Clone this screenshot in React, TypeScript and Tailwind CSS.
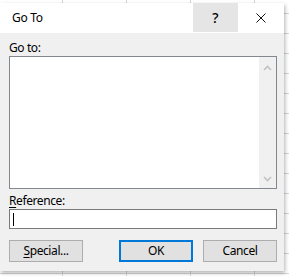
import * as React from "react"

const font = { fontFamily: '"Noto Sans", "Open Sans", sans-serif' }

function Chevron({ up }: { up?: boolean }) {
    return (
        <svg width="9" height="6" viewBox="0 0 9 6" className="block">
            <path
                d={up ? "M1 5 L4.5 1.5 L8 5" : "M1 1 L4.5 4.5 L8 1"}
                fill="none"
                stroke="#c2c2c2"
                strokeWidth="1.6"
            />
        </svg>
    )
}

function DialogButton({ children, isDefault }: { children: React.ReactNode; isDefault?: boolean }) {
    return (
        <button
            className={
                isDefault
                    ? "h-[22px] w-[74px] bg-[#e1e1e1] border-2 border-[#0078d7] text-[12px] tracking-[-0.4px] text-black leading-none"
                    : "h-[22px] w-[74px] bg-[#e1e1e1] border border-[#adadad] text-[12px] tracking-[-0.4px] text-black leading-none"
            }
        >
            {children}
        </button>
    )
}

export default function App() {
    return (
        <div
            className="relative w-[289px] h-[276px] overflow-hidden bg-white bg-[linear-gradient(to_right,#d4d4d4_1px,transparent_1px),linear-gradient(to_bottom,#d4d4d4_1px,transparent_1px)] [background-size:64px_20px] [background-position:62px_13px]"
            style={font}
        >
            {/* Go To dialog over the sheet */}
            <div className="absolute left-0 top-[3px] w-[284px] h-[268px] flex flex-col bg-[#f0f0f0] shadow-[1px_2px_4px_rgba(0,0,0,0.3)]">
                <div className="h-[30px] flex items-center bg-white shrink-0">
                    <span className="pl-[12px] text-[12px] tracking-[-0.3px] text-black flex-1">Go To</span>
                    <div className="w-[45px] h-[29px] self-start bg-[#e5e5e5] flex items-center justify-center text-[14px] font-medium text-black">
                        ?
                    </div>
                    <div className="w-[46px] h-full flex items-center justify-center">
                        <svg width="10" height="10" viewBox="0 0 10 10">
                            <path d="M0.5 0.5 L9.5 9.5 M9.5 0.5 L0.5 9.5" stroke="#111" strokeWidth="1" />
                        </svg>
                    </div>
                </div>

                <div className="flex flex-col pl-[9px] pr-[7px] pt-[7px] text-[12px] tracking-[-0.4px]">
                    <div className="h-[16px] leading-[16px] text-black">Go to:</div>
                    <div className="h-[133px] border border-[#828790] bg-white flex">
                        <div className="flex-1" />
                        <div className="w-[17px] bg-[#f0f0f0] flex flex-col items-center justify-between pt-[8px] pb-[6px]">
                            <Chevron up />
                            <Chevron />
                        </div>
                    </div>

                    <div className="mt-[4px] h-[16px] leading-[16px] text-black">
                        <span className="underline underline-offset-2">R</span>eference:
                    </div>
                    <div className="h-[20px] border border-[#7a7a7a] bg-white flex items-center pl-[3px]">
                        <div className="w-px h-[13px] bg-black" />
                    </div>

                    <div className="mt-[11px] flex">
                        <DialogButton>
                            <span className="underline underline-offset-2">S</span>pecial...
                        </DialogButton>
                        <div className="ml-[36px]">
                            <DialogButton isDefault>OK</DialogButton>
                        </div>
                        <div className="ml-[10px]">
                            <DialogButton>Cancel</DialogButton>
                        </div>
                    </div>
                </div>
            </div>
        </div>
    )
}
